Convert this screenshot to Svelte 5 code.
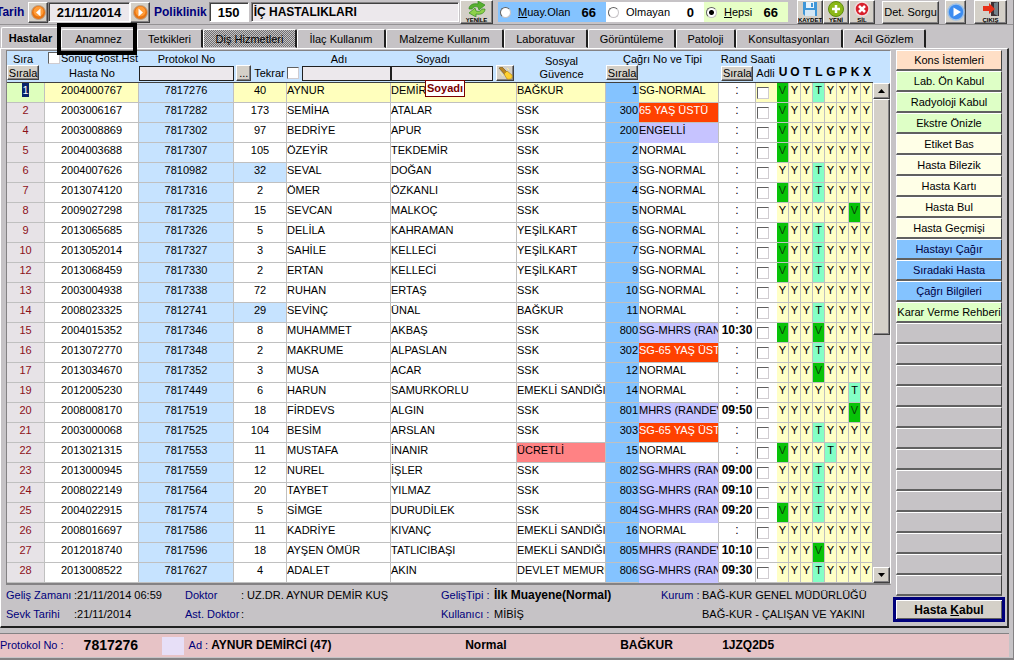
<script lang="ts">
  type Row = {
    no: number;
    hasta: string;
    protokol: string;
    tekrar: number;
    adi: string;
    soyadi: string;
    guvence: string;
    cagri: number;
    tip: string;
    saat: string;
    flags: string;
  };

  const tabs = [
    { label: 'Hastalar', width: 60 },
    { label: 'Anamnez', width: 76 },
    { label: 'Tetkikleri', width: 66 },
    { label: 'Diş Hizmetleri', width: 94 },
    { label: 'İlaç Kullanım', width: 89 },
    { label: 'Malzeme Kullanım', width: 118 },
    { label: 'Laboratuvar', width: 84 },
    { label: 'Görüntüleme', width: 88 },
    { label: 'Patoloji', width: 60 },
    { label: 'Konsultasyonları', width: 107 },
    { label: 'Acil Gözlem', width: 83 },
  ];

  const source = `
1|2004000767|7817276|40|AYNUR|DEMİRCİ|BAĞKUR|1|SG-NORMAL||VYYTYYYY
2|2003006167|7817282|173|SEMİHA|ATALAR|SSK|300|65 YAŞ ÜSTÜ||VYYYYYYY
4|2003008869|7817302|97|BEDRİYE|APUR|SSK|200|ENGELLİ||VYYYYYYY
5|2004003688|7817307|105|ÖZEYİR|TEKDEMİR|SSK|2|NORMAL||VYYYYYYY
6|2004007626|7810982|32|SEVAL|DOĞAN|SSK|3|SG-NORMAL||YYYTYYYY
7|2013074120|7817316|2|ÖMER|ÖZKANLI|SSK|4|SG-NORMAL||VYYTYYYY
8|2009027298|7817325|15|SEVCAN|MALKOÇ|SSK|5|NORMAL||YYYYYYVY
9|2013065685|7817326|5|DELİLA|KAHRAMAN|YEŞİLKART|6|SG-NORMAL||VYYTYYYY
10|2013052014|7817327|3|SAHİLE|KELLECİ|YEŞİLKART|7|SG-NORMAL||VYYTYYYY
12|2013068459|7817330|2|ERTAN|KELLECİ|YEŞİLKART|9|SG-NORMAL||VYYTYYYY
13|2003004938|7817338|72|RUHAN|ERTAŞ|SSK|10|SG-NORMAL||YYYYYYYY
14|2008023325|7812741|29|SEVİNÇ|ÜNAL|BAĞKUR|11|NORMAL||YYYTYYYY
15|2004015352|7817346|8|MUHAMMET|AKBAŞ|SSK|800|SG-MHRS (RANDEVU)|10:30|VYYVYYYY
16|2013072770|7817348|2|MAKRUME|ALPASLAN|SSK|302|SG-65 YAŞ ÜSTÜ||YYYTYYYY
17|2013034670|7817352|3|MUSA|ACAR|SSK|12|NORMAL||YYYVYYYY
19|2012005230|7817449|6|HARUN|SAMURKORLU|EMEKLİ SANDIĞI|14|NORMAL||YYYYYYTY
20|2008008170|7817519|18|FİRDEVS|ALGIN|SSK|801|MHRS (RANDEVU)|09:50|YYYYYYVY
21|2003000068|7817525|104|BESİM|ARSLAN|SSK|303|SG-65 YAŞ ÜSTÜ||YYYTYYYY
22|2013021315|7817553|11|MUSTAFA|İNANIR|ÜCRETLİ|15|NORMAL||VYYYTYYY
23|2013000945|7817559|12|NUREL|İŞLER|SSK|802|SG-MHRS (RANDEVU)|09:00|YYYTYYYY
24|2008022149|7817564|20|TAYBET|YILMAZ|SSK|803|SG-MHRS (RANDEVU)|09:10|YYYTYYYY
25|2004022915|7817574|5|SİMGE|DURUDİLEK|SSK|804|SG-MHRS (RANDEVU)|09:20|VYYTYYYY
26|2008016697|7817586|11|KADRİYE|KIVANÇ|EMEKLİ SANDIĞI|16|NORMAL||YYYYYYYY
27|2012018740|7817596|18|AYŞEN ÖMÜR|TATLICIBAŞI|EMEKLİ SANDIĞI|805|MHRS (RANDEVU)|10:10|YYYVYYYY
28|2013008522|7817627|4|ADALET|AKIN|DEVLET MEMURU|806|SG-MHRS (RANDEVU)|09:30|YYYTYYYY`;

  const rows: Row[] = source.trim().split('\n').map((line) => {
    const [no, hasta, protokol, tekrar, adi, soyadi, guvence, cagri, tip, saat, flags] = line.split('|');
    return { no: +no, hasta, protokol, tekrar: +tekrar, adi, soyadi, guvence, cagri: +cagri, tip, saat, flags };
  });

  const actions = [
    { label: 'Kons İstemleri', tone: 'peach' },
    { label: 'Lab. Ön Kabul', tone: 'green' },
    { label: 'Radyoloji Kabul', tone: 'green' },
    { label: 'Ekstre Önizle', tone: 'green' },
    { label: 'Etiket Bas', tone: 'cream' },
    { label: 'Hasta Bilezik', tone: 'cream' },
    { label: 'Hasta Kartı', tone: 'cream' },
    { label: 'Hasta Bul', tone: 'cream' },
    { label: 'Hasta Geçmişi', tone: 'cream' },
    { label: 'Hastayı Çağır', tone: 'blue' },
    { label: 'Sıradaki Hasta', tone: 'blue' },
    { label: 'Çağrı Bilgileri', tone: 'blue' },
    { label: 'Karar Verme Rehberi', tone: 'green' },
  ];

  // Free slots under the action buttons
  const emptySlots = 13;

  let activeTab = $state('Hastalar');
  let selected = $state(1);
  let filter = $state('hepsi');

  // Priority colour of the call type
  function tipTone(tip: string): string {
    if (tip.includes('65 YAŞ')) return 'elder';
    if (tip.includes('MHRS') || tip === 'ENGELLİ') return 'priority';
    return '';
  }
</script>

{#snippet arrowIcon(dir: string)}
  <svg width="15" height="15" viewBox="0 0 15 15">
    <circle cx="7.5" cy="7.5" r="7" fill="#e87410" stroke="#b9a28c" />
    <circle cx="7.5" cy="6.5" r="5" fill="#ff9c38" />
    <path d={dir === 'left' ? 'M9.5 3.5L5 7.5L9.5 11.5Z' : 'M5.5 3.5L10 7.5L5.5 11.5Z'} fill="#fff" />
  </svg>
{/snippet}

<div class="window">
  <header class="toolbar">
    <label class="caption tarih" for="tarih">Tarih</label>
    <button class="raised step" aria-label="Önceki gün">{@render arrowIcon('left')}</button>
    <input id="tarih" class="sunken date" value="21/11/2014" />
    <button class="raised step" aria-label="Sonraki gün">{@render arrowIcon('right')}</button>
    <label class="caption" for="poliklinik">Poliklinik</label>
    <input id="poliklinik" class="sunken code" value="150" />
    <input class="sunken clinic" aria-label="Poliklinik adı" value="İÇ HASTALIKLARI" />
    <button class="raised tool wide">
      <svg width="20" height="16" viewBox="0 0 20 16">
        <path d="M2 8C2 4 6 2 11 3L11 0L18 4L12 9L11 6C8 5 6 6 5 8Z" fill="#58b030" stroke="#2f8a1c" stroke-width=".7" />
        <path d="M18 8C18 12 14 14 9 13L9 16L2 12L8 7L9 10C12 11 14 10 15 8Z" fill="#8ed04a" stroke="#2f8a1c" stroke-width=".7" />
      </svg>
      <span>YENİLE</span>
    </button>

    <div class="filters">
      <label class="filter blue">
        <input type="radio" name="filter" value="muay" bind:group={filter} />
        <span><u>M</u>uay.Olan</span><b>66</b>
      </label>
      <label class="filter white">
        <input type="radio" name="filter" value="olmayan" bind:group={filter} />
        <span>Olmayan</span><b>0</b>
      </label>
      <label class="filter green">
        <input type="radio" name="filter" value="hepsi" bind:group={filter} />
        <span><u>H</u>epsi</span><b>66</b>
      </label>
    </div>

    <div class="tools">
      <button class="raised tool">
        <svg width="16" height="16" viewBox="0 0 16 16">
          <path d="M1 1H15V15H3L1 13Z" fill="#3f97d8" />
          <rect x="4" y="1" width="8" height="6" fill="#e9f4fc" />
          <rect x="9" y="2" width="2" height="4" fill="#3f97d8" />
          <rect x="3" y="9" width="10" height="6" fill="#d3e7f5" />
        </svg>
        <span>KAYDET</span>
      </button>
      <button class="raised tool">
        <svg width="16" height="16" viewBox="0 0 16 16">
          <circle cx="8" cy="8" r="7.5" fill="#8cb818" stroke="#5f8c10" />
          <path d="M8 4V12M4 8H12" stroke="#fff" stroke-width="2.5" />
        </svg>
        <span>YENİ</span>
      </button>
      <button class="raised tool">
        <svg width="16" height="16" viewBox="0 0 16 16">
          <circle cx="8" cy="8" r="7" fill="#d8202c" stroke="#f0dcdc" stroke-width="1.5" />
          <path d="M5 5L11 11M11 5L5 11" stroke="#fff" stroke-width="2.5" />
        </svg>
        <span>SİL</span>
      </button>
    </div>
    <button class="raised sorgu">Det. Sorgu</button>
    <button class="raised play" aria-label="Başlat">
      <svg width="18" height="18" viewBox="0 0 18 18">
        <circle cx="9" cy="9" r="8" fill="#3c8cf0" stroke="#9cc0e8" stroke-width="1.5" />
        <path d="M6.5 4.5L14 9L6.5 13.5Z" fill="#fff" />
      </svg>
    </button>
    <button class="raised tool wide exit">
      <svg width="18" height="16" viewBox="0 0 18 16">
        <path d="M9 1H17V15H9Z" fill="#3c3034" />
        <path d="M12 2L16 1V15L12 13Z" fill="#71828a" />
        <path d="M1 5H7V2L13 8L7 13V10H1Z" fill="#e83018" />
      </svg>
      <span>ÇIKIŞ</span>
    </button>
  </header>

  <div class="tabs" role="tablist">
    {#each tabs as tab}
      <button
        class="tab"
        class:active={activeTab === tab.label}
        class:marked={tab.label === 'Anamnez'}
        class:dotted={tab.label === 'Diş Hizmetleri'}
        role="tab"
        aria-selected={activeTab === tab.label}
        style="width: {tab.width}px"
        onclick={() => (activeTab = tab.label)}
      >{tab.label}</button>
    {/each}
  </div>

  <main class="panel">
    <section class="content">
      <div class="grid">
        <table>
          <colgroup>
            <col class="w-no" /><col class="w-hasta" /><col class="w-protokol" /><col class="w-tekrar" />
            <col class="w-adi" /><col /><col class="w-guvence" /><col class="w-cagri" />
            <col class="w-tip" /><col class="w-saat" /><col class="w-adli" />
            {#each 'UOTLGPKX' as _}<col class="w-flag" />{/each}
          </colgroup>
          <thead>
            <tr>
              <th>
                <div class="top indent">Sıra</div>
                <button class="raised sort">Sırala</button>
              </th>
              <th>
                <label class="top result"><input type="checkbox" />Sonuç Göst.Hst</label>
                <div class="bottom">Hasta No</div>
              </th>
              <th>
                <label class="top" for="f-protokol">Protokol No</label>
                <div class="bottom"><input id="f-protokol" class="search" /></div>
              </th>
              <th>
                <div class="top"></div>
                <div class="bottom"><button class="raised dots" aria-label="Protokol seç">...</button><span>Tekrar</span></div>
              </th>
              <th>
                <label class="top" for="f-adi">Adı</label>
                <div class="bottom gap"><input type="checkbox" aria-label="Tekrar" /><input id="f-adi" class="search" /></div>
              </th>
              <th class="surname">
                <label class="top" for="f-soyadi">Soyadı</label>
                <div class="bottom gap">
                  <input id="f-soyadi" class="search" />
                  <button class="raised torch" aria-label="Ara">
                    <svg width="15" height="13" viewBox="0 0 15 13">
                      <path d="M1 1L4 0L9 5L7 8Z" fill="#b98524" stroke="#705010" stroke-width=".6" />
                      <path d="M6 7L9 4L14 8C15 11 13 13 9 12Z" fill="#ffd030" stroke="#a87c10" stroke-width=".6" />
                      <path d="M2 5L5 9M9 1L11 3" stroke="#fff1a0" />
                    </svg>
                  </button>
                </div>
                <span class="tooltip" role="tooltip">Soyadı</span>
              </th>
              <th>
                <div class="two-line">Sosyal<br />Güvence</div>
              </th>
              <th colspan="2">
                <div class="top">Çağrı No ve Tipi</div>
                <button class="raised sort">Sırala</button>
              </th>
              <th colspan="2">
                <div class="top">Rand Saati</div>
                <div class="bottom gap"><button class="raised sort">Sırala</button><span>Adli</span></div>
              </th>
              {#each 'UOTLGPKX' as letter}
                <th class="letter">{letter}</th>
              {/each}
            </tr>
          </thead>
          <tbody>
            {#each rows as row}
              <tr class:selected={selected === row.no} onclick={() => (selected = row.no)}>
                <td class="no"><span>{row.no}</span></td>
                <td class="center">{row.hasta}</td>
                <td class="center protokol">{row.protokol}</td>
                <td class="center" class:repeat={row.protokol < '7817000'}>{row.tekrar}</td>
                <td>{row.adi}</td>
                <td>{row.soyadi}</td>
                <td class:paid={row.guvence === 'ÜCRETLİ'}>{row.guvence}</td>
                <td class="cagri">{row.cagri}</td>
                <td class={tipTone(row.tip)}>{row.tip}</td>
                <td class="saat" class:unset={!row.saat}>{row.saat || ':'}</td>
                <td class="adli"><input type="checkbox" aria-label="Adli {row.adi}" /></td>
                {#each row.flags as flag}
                  <td class="flag {flag}">{flag}</td>
                {/each}
              </tr>
            {/each}
          </tbody>
        </table>
        <div class="scroll">
          <button class="raised" aria-label="Yukarı"><svg width="7" height="4" viewBox="0 0 7 4"><path d="M3.5 0L7 4H0Z" /></svg></button>
          <div class="raised thumb"></div>
          <div class="track"></div>
          <button class="raised" aria-label="Aşağı"><svg width="7" height="4" viewBox="0 0 7 4"><path d="M0 0H7L3.5 4Z" /></svg></button>
        </div>
      </div>

      <dl class="info">
        <dt>Geliş Zamanı</dt><dd>:21/11/2014 06:59</dd>
        <dt>Doktor</dt><dd>: UZ.DR. AYNUR DEMİR KUŞ</dd>
        <dt>GelişTipi :</dt><dd><b>İlk Muayene(Normal)</b></dd>
        <dt>Kurum :</dt><dd>BAĞ-KUR GENEL MÜDÜRLÜĞÜ</dd>
        <dt>Sevk Tarihi</dt><dd>:21/11/2014</dd>
        <dt>Ast. Doktor</dt><dd>:</dd>
        <dt>Kullanıcı :</dt><dd>MİBİŞ</dd>
        <dt></dt><dd>BAĞ-KUR - ÇALIŞAN VE YAKINI</dd>
      </dl>
    </section>

    <aside class="side">
      {#each actions as action}
        <button class="slot {action.tone}">{action.label}</button>
      {/each}
      {#each { length: emptySlots } as _}
        <div class="slot"></div>
      {/each}
      <button class="raised accept">Hasta <u>K</u>abul</button>
    </aside>
  </main>

  <footer class="status">
    <span class="key">Protokol No :</span>
    <b class="number">7817276</b>
    <i class="swatch"></i>
    <span class="key">Ad :</span>
    <b class="name">AYNUR DEMİRCİ (47)</b>
    <b class="kind">Normal</b>
    <b class="insurer">BAĞKUR</b>
    <b>1JZQ2D5</b>
  </footer>
</div>

<style>
  :global(body) {
    background: #c6c3c6;
    overflow-x: hidden;
  }

  .window,
  .window button,
  .window input {
    box-sizing: border-box;
    font-family: 'Liberation Sans', Arial, sans-serif;
    font-size: 11px;
    color: #000;
  }

  .window {
    background: #c6c3c6;
    border-right: 1px solid #848284;
    border-bottom: 2px solid #848284;
    line-height: 15px;
  }

  button,
  input {
    margin: 0;
    padding: 0;
    border-radius: 0;
    min-width: 0;
  }

  .raised {
    display: flex;
    align-items: center;
    justify-content: center;
    background: #d4d0c8;
    border: 1px solid;
    border-color: #fff #404040 #404040 #fff;
    box-shadow: inset -1px -1px #848284;
  }

  /* Toolbar */
  .toolbar {
    display: flex;
    align-items: center;
    height: 24px;
    border-bottom: 1px solid #949294;
  }

  .caption {
    color: #00007b;
    font-size: 12px;
    font-weight: bold;
    margin: 0 2px 0 4px;
  }

  .caption.tarih {
    margin-left: -4px;
    width: 30px;
  }

  .step {
    width: 20px;
    height: 21px;
    flex: none;
  }

  .window .sunken {
    height: 20px;
    border: 1px solid;
    border-color: #848284 #fff #fff #848284;
    box-shadow: inset 1px 1px #404040;
    background: #ece8ec;
    font-size: 13px;
    font-weight: bold;
  }

  .sunken.date {
    width: 82px;
    text-align: center;
  }

  .window .sunken.code {
    width: 40px;
    text-align: center;
    background: #fff;
  }

  .window .sunken.clinic {
    flex: 1;
    margin: 0 1px 0 2px;
    padding-left: 2px;
    font-size: 12px;
  }

  .tool {
    flex-direction: column;
    justify-content: flex-start;
    width: 26px;
    height: 24px;
    overflow: hidden;
  }

  .tool.wide {
    width: 33px;
  }

  .tool svg {
    flex: none;
  }

  .tool span {
    font-size: 6px;
    font-weight: bold;
    line-height: 6px;
  }

  .filters {
    display: flex;
    margin-left: 5px;
    height: 20px;
  }

  .filter {
    display: flex;
    align-items: center;
    gap: 7px;
    padding: 0 10px 0 2px;
    box-sizing: border-box;
  }

  .filter b {
    font-size: 13px;
    margin-left: auto;
  }

  .filter.blue {
    width: 108px;
    background: #84c3ff;
  }

  .filter.white {
    width: 98px;
    background: #fff;
  }

  .filter.green {
    width: 84px;
    background: #e7ffc6;
  }

  input[type='radio'] {
    appearance: none;
    width: 11px;
    height: 11px;
    flex: none;
    border: 1px solid;
    border-color: #606060 #c6c3c6 #c6c3c6 #606060;
    border-radius: 50%;
    background: #fff;
  }

  input[type='radio']:checked {
    background: radial-gradient(circle, #000 0 2px, #fff 3px);
  }

  .tools {
    display: flex;
    margin: 0 7px 0 9px;
  }

  .sorgu {
    width: 57px;
    height: 23px;
    white-space: nowrap;
  }

  .play {
    width: 21px;
    height: 24px;
    margin: 0 8px 0 6px;
    flex: none;
  }

  .exit {
    margin-right: 6px;
  }

  /* Tabs */
  .tabs {
    display: flex;
    align-items: flex-end;
    height: 23px;
    padding-left: 1px;
  }

  .tab {
    position: relative;
    height: 19px;
    background: #c6c3c6;
    border: 1px solid;
    border-color: #fff #202020 #c6c3c6 #fff;
    border-right-width: 2px;
    border-radius: 2px 2px 0 0;
    white-space: nowrap;
  }

  .window .tab.active {
    height: 21px;
    font-weight: bold;
    border-right-color: #c6c3c6;
  }

  .tab.marked::after {
    content: '';
    position: absolute;
    inset: -7px -2px -8px -5px;
    border: 4px solid #000;
    z-index: 2;
    pointer-events: none;
  }

  .tab.dotted {
    background: repeating-conic-gradient(#707070 0 25%, #c6c3c6 0 50%) 0 0 / 2px 2px;
  }

  /* Page */
  .panel {
    display: flex;
    margin-right: 4px;
    padding: 1px 2px 4px 5px;
    border-top: 1px solid #fff;
    border-left: 1px solid #fff;
    border-right: 2px solid #303030;
    border-bottom: 2px solid #202020;
  }

  .content {
    flex: 1;
    min-width: 0;
  }

  .grid {
    display: flex;
    background: #c6e3ff;
    border: 1px solid #848284;
    border-right-color: #fff;
    border-bottom: 2px solid #848284;
  }

  table {
    width: calc(100% - 17px);
    table-layout: fixed;
    border-spacing: 0;
    background: #fff;
  }

  .w-no { width: 38px; }
  .w-hasta { width: 94px; }
  .w-protokol { width: 95px; }
  .w-tekrar { width: 53px; }
  .w-adi { width: 104px; }
  .w-guvence { width: 89px; }
  .w-cagri { width: 33px; }
  .w-tip { width: 80px; }
  .w-saat { width: 37px; }
  .w-adli { width: 21px; }
  .w-flag { width: 12px; }

  th {
    height: 31px;
    padding: 0;
    background: #c6e3ff;
    border-bottom: 1px solid #404040;
    font-weight: normal;
    vertical-align: top;
    white-space: nowrap;
  }

  .top {
    display: block;
    height: 14px;
    line-height: 16px;
  }

  .top.indent {
    padding-right: 6px;
  }

  .top.result {
    display: flex;
    align-items: center;
    gap: 1px;
    padding-left: 3px;
  }

  .bottom {
    display: flex;
    align-items: center;
    justify-content: center;
    height: 16px;
  }

  .bottom.gap {
    gap: 3px;
  }

  .two-line {
    padding-top: 4px;
    line-height: 13px;
  }

  .sort {
    width: 32px;
    height: 15px;
  }

  .dots {
    width: 15px;
    height: 16px;
    margin-right: 3px;
  }

  .torch {
    width: 18px;
    height: 16px;
    flex: none;
  }

  .search {
    flex: 1;
    height: 15px;
    border: 1px solid #202020;
    background: #ece8ec;
  }

  .surname .bottom {
    padding-right: 3px;
  }

  .surname .top {
    padding-right: 42px;
  }

  .surname {
    position: relative;
  }

  .tooltip {
    position: absolute;
    left: 34px;
    top: 29px;
    z-index: 1;
    padding: 0 1px;
    border: 1px solid #7b0000;
    background: #fff;
    color: #7b0000;
    font-weight: bold;
  }

  th.letter {
    height: 29px;
    padding-bottom: 2px;
    font-size: 12px;
    font-weight: bold;
    vertical-align: bottom;
  }

  input[type='checkbox'] {
    appearance: none;
    display: block;
    width: 12px;
    height: 12px;
    flex: none;
    border: 1px solid;
    border-color: #606060 #d0ccd0 #d0ccd0 #606060;
    background: #fff;
  }

  input[type='checkbox']:checked {
    background: #404040;
  }

  td {
    box-sizing: border-box;
    height: 20px;
    padding: 0;
    border-right: 1px solid #c0c0c0;
    border-bottom: 1px solid #c0c0c0;
    overflow: hidden;
    white-space: nowrap;
    vertical-align: top;
  }

  .selected td {
    background: #ffffbd;
  }

  td.center,
  td.no,
  td.saat,
  td.flag {
    text-align: center;
  }

  td.no {
    background: #e7e3e7;
    color: #8c1018;
  }

  .selected td.no {
    background: #deffbd;
  }

  .selected td.no span {
    padding: 1px 0;
    background: #08246b;
    color: #fff;
  }

  tr td.protokol,
  td.repeat {
    background: #c6e3ff;
  }

  td.paid {
    background: #ff8284;
  }

  tr td.cagri {
    background: #84c3ff;
    border-right-color: #84c3ff;
    text-align: right;
  }

  td.elder {
    background: #ff4100;
    color: #fff;
  }

  td.priority {
    background: #c6c3ff;
    border-bottom-color: #c6c3ff;
  }

  tr td.saat {
    background: #fff;
    font-size: 12px;
    font-weight: bold;
  }

  tr td.saat.unset {
    font-weight: normal;
  }

  td.adli {
    padding: 4px 0 0 1px;
    border-right: none;
  }

  td.flag {
    background: #ffffc6;
  }

  tr td.flag.V {
    background: #08c308;
    color: #084008;
  }

  tr td.flag.T {
    background: #84ffc6;
  }

  .scroll {
    display: flex;
    flex-direction: column;
    width: 17px;
    margin-top: 32px;
    background: #c6c3c6;
  }

  .scroll button {
    height: 16px;
  }

  .thumb {
    flex: 235;
  }

  .track {
    flex: 233;
  }

  /* Visit details */
  .info {
    display: grid;
    grid-template-columns: 68px 111px 56px 200px 53px 167px 41px 1fr;
    row-gap: 4px;
    margin: 3px 0 0;
    white-space: nowrap;
  }

  dt {
    color: #00007b;
  }

  dd {
    margin: 0;
  }

  .info b {
    font-size: 12px;
  }

  /* Actions */
  .side {
    display: flex;
    flex-direction: column;
    width: 112px;
    margin-left: 2px;
  }

  .slot {
    box-sizing: border-box;
    height: 21px;
    margin: 0 3px;
    background: #c6c3c6;
    border: 1px solid;
    border-color: #fff #404040 #606060 #fff;
    border-bottom-width: 2px;
    white-space: nowrap;
  }

  .slot.peach { background: #ffdfc6; }
  .slot.green { background: #deffc6; }
  .slot.cream { background: #ffffe7; }

  .window .slot.blue {
    background: #84c3ff;
    color: #000042;
  }

  .window .accept {
    display: block;
    height: 25px;
    margin-top: 1px;
    border: 3px solid #00007b;
    box-shadow: inset 1px 1px #fff, inset -1px -1px #606060;
    font-size: 12px;
    font-weight: bold;
  }

  /* Status bar */
  .status {
    display: flex;
    align-items: center;
    height: 23px;
    margin: 5px 4px 1px 0;
    background: #e7c3c6;
    border-top: 1px solid #848284;
    white-space: nowrap;
    font-size: 12px;
  }

  .key {
    color: #00007b;
    font-size: 11px;
  }

  .number {
    width: 78px;
    margin-left: 20px;
    font-size: 14px;
  }

  .swatch {
    width: 22px;
    height: 18px;
    margin-right: 5px;
    background: #e7dff7;
  }

  .name {
    width: 254px;
    margin-left: 3px;
  }

  .kind {
    width: 155px;
  }

  .insurer {
    width: 102px;
  }
</style>
